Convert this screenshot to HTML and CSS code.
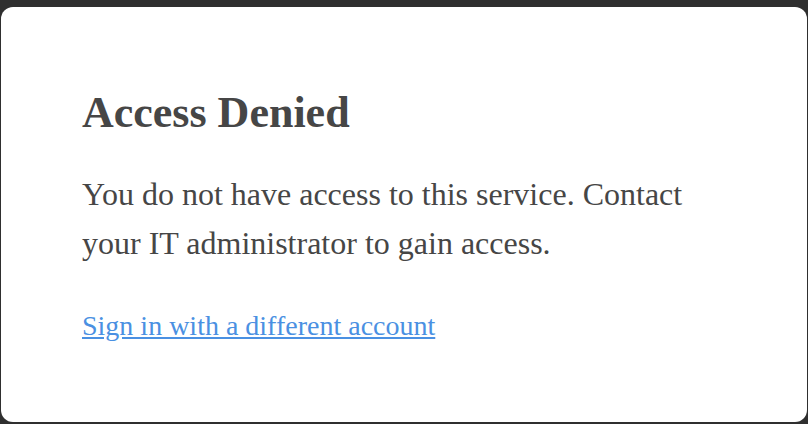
FILE: index.html
```html
<!DOCTYPE html>
<html>
<head>
<meta charset="utf-8">
<link rel="stylesheet" href="styles.css">
</head>
<body>
<div class="card">
  <h1 class="title">Access Denied</h1>
  <p class="message">You do not have access to this service. Contact your IT administrator to gain access.</p>
  <a class="link" href="#">Sign in with a different account</a>
</div>
</body>
</html>
```
FILE: styles.css
```css
html, body {
  margin: 0;
  height: 100%;
}
body {
  background: #2f2f2f;
  padding: 7px 1px 2px 1px;
  box-sizing: border-box;
  font-family: "Liberation Serif", "Times New Roman", serif;
}
.card {
  background: #ffffff;
  height: 100%;
  border-radius: 12px;
  box-sizing: border-box;
  padding: 81px 81px 0 81px;
  color: #464646;
}
.title {
  margin: 0;
  font-size: 44px;
  font-weight: bold;
  line-height: 50px;
}
.message {
  margin: 32px 0 0 0;
  font-size: 32px;
  line-height: 49px;
}
.link {
  display: inline-block;
  margin-top: 42px;
  font-size: 28px;
  line-height: 32px;
  color: #4a90e2;
  text-decoration: underline;
}
```
